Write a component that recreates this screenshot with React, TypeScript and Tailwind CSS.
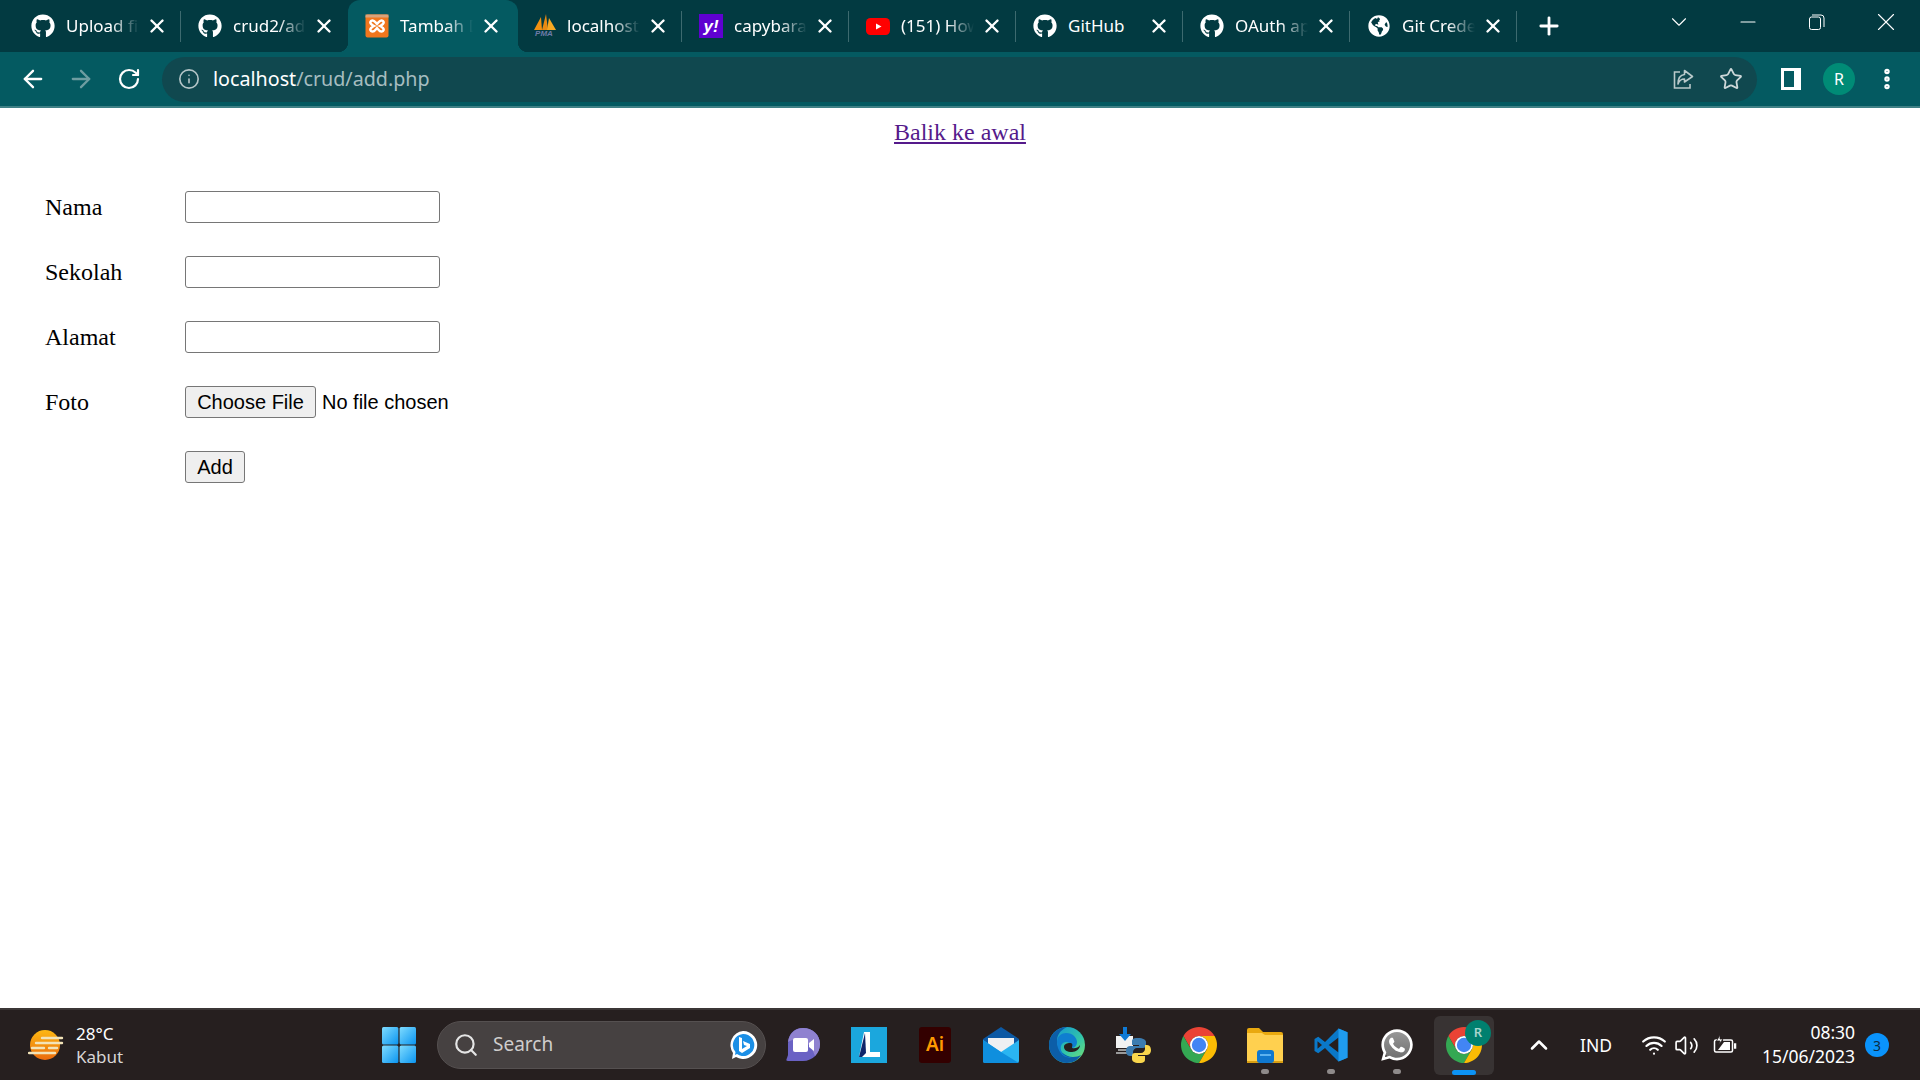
import type { ReactNode } from "react";
import {
  ArrowLeft,
  ArrowRight,
  ChevronDown,
  ChevronUp,
  EllipsisVertical,
  Info,
  Minus,
  Plus,
  RotateCw,
  Search,
  Star,
  Volume2,
  Wifi,
  X,
} from "lucide-react";
import { FaGithub, FaGlobeAmericas, FaWhatsapp } from "react-icons/fa";

const XamppIcon = () => (
  <svg viewBox="0 0 24 24" className="h-6 w-6">
    <rect x="0.5" y="0.5" width="23" height="23" rx="2" fill="#f0761d" />
    <rect x="0.5" y="0.5" width="23" height="3" fill="#d9a27a" />
    <path
      d="M6 7c3-2 4 1 6 3 2-2 3-5 6-3 2 2-1 4-3 5 2 1 5 3 3 5-3 2-4-1-6-3-2 2-3 5-6 3-2-2 1-4 3-5-2-1-5-3-3-5z"
      fill="none"
      stroke="#fff"
      strokeWidth="2.4"
    />
  </svg>
);

const PmaIcon = () => (
  <svg viewBox="0 0 24 24" className="h-6 w-6">
    <path d="M2 16 L9 3 L10 16z" fill="#f29111" />
    <path d="M10 16 L14 0 L16 16z" fill="#e98a12" />
    <path d="M15 16 L17 4 L24 16z" fill="#f7a823" />
    <text x="12" y="22" textAnchor="middle" fontSize="8" fontStyle="italic" fontWeight="700" fill="#6d7aa8" fontFamily="Liberation Sans, sans-serif">
      PMA
    </text>
  </svg>
);

const YahooIcon = () => (
  <span className="flex h-6 w-6 items-center justify-center bg-[#5f01d1] font-['Liberation_Sans',sans-serif] text-[17px] font-bold italic leading-none text-white">
    y!
  </span>
);

const YoutubeIcon = () => (
  <svg viewBox="0 0 24 24" className="h-6 w-6">
    <rect x="0" y="4" width="24" height="17" rx="4.5" fill="#f00" />
    <path d="M10 9.500 L15.500 12.500 L10 15.500z" fill="#fff" />
  </svg>
);

const tabs: { title: string; icon: ReactNode; active?: boolean; noFade?: boolean }[] = [
  { title: "Upload fi", icon: <FaGithub className="h-6 w-6 text-white" /> },
  { title: "crud2/ad", icon: <FaGithub className="h-6 w-6 text-white" /> },
  { title: "Tambah D", icon: <XamppIcon />, active: true },
  { title: "localhost", icon: <PmaIcon /> },
  { title: "capybara", icon: <YahooIcon /> },
  { title: "(151) How", icon: <YoutubeIcon /> },
  { title: "GitHub", icon: <FaGithub className="h-6 w-6 text-white" />, noFade: true },
  { title: "OAuth ap", icon: <FaGithub className="h-6 w-6 text-white" /> },
  { title: "Git Crede", icon: <FaGlobeAmericas className="h-[22px] w-[22px] text-white" /> },
];

const Tab = ({ title, icon, active, noFade, hideLine }: { title: string; icon: ReactNode; active?: boolean; noFade?: boolean; hideLine?: boolean }) => (
  <div
    className={
      active
        ? "relative mr-[-3px] flex h-full w-[170px] items-center rounded-t-[12px] bg-[#045a61] pl-[17px]"
        : hideLine
          ? "flex h-[31px] w-[167px] items-center pl-[17px]"
          : "flex h-[31px] w-[167px] items-center border-r border-[#3d6a6f] pl-[17px]"
    }
  >
    {active && (
      <>
        <span className="absolute bottom-0 left-[-10px] h-[10px] w-[10px] bg-[radial-gradient(circle_at_0_0,transparent_10px,#045a61_10.5px)]" />
        <span className="absolute bottom-0 right-[-10px] h-[10px] w-[10px] bg-[radial-gradient(circle_at_100%_0,transparent_10px,#045a61_10.5px)]" />
      </>
    )}
    <span className="flex w-6 shrink-0 justify-center">{icon}</span>
    <span
      className={
        noFade
          ? "ml-[11px] w-[73px] overflow-hidden whitespace-nowrap text-[17px] text-white"
          : "ml-[11px] w-[73px] overflow-hidden whitespace-nowrap text-[17px] text-white [mask-image:linear-gradient(to_right,black_62%,transparent_100%)]"
      }
    >
      {title}
    </span>
    <X size={22} strokeWidth={2.6} className="ml-[7px] shrink-0 text-white" />
  </div>
);

const ShareIcon = () => (
  <svg viewBox="0 0 24 24" className="h-6 w-6" fill="none" stroke="#b9c9ca" strokeWidth="1.6">
    <path d="M9 5H3.500v16H19v-4" />
    <path d="M13.500 3.500 L21.500 9.500 L13.500 15 V12 C10 12 8 14 7 17 C7 12 9 8 13.500 7.500z" strokeLinejoin="round" />
  </svg>
);

const WeatherIcon = () => (
  <svg viewBox="0 0 36 30" className="h-[30px] w-9">
    <defs>
      <linearGradient id="sun" x1="0" y1="0" x2="0" y2="1">
        <stop offset="0" stopColor="#fdb813" />
        <stop offset="1" stopColor="#ea6a0c" />
      </linearGradient>
    </defs>
    <ellipse cx="17" cy="15" rx="15" ry="15" fill="url(#sun)" />
    <g stroke="#f2e3b8" strokeWidth="2.4" strokeLinecap="round">
      <path d="M14 8h20" />
      <path d="M8 13h26" />
      <path d="M4 18h12" />
      <path d="M21 18h8" />
      <path d="M1 23h26" />
    </g>
  </svg>
);

const WindowsIcon = () => (
  <svg viewBox="0 0 34 36" className="h-9 w-[34px]">
    <defs>
      <linearGradient id="win" x1="0" y1="0" x2="1" y2="1">
        <stop offset="0" stopColor="#7fdcff" />
        <stop offset="1" stopColor="#0a94f0" />
      </linearGradient>
    </defs>
    <rect x="0" y="0" width="16.4" height="17.4" rx="1.5" fill="url(#win)" />
    <rect x="17.6" y="0" width="16.4" height="17.4" rx="1.5" fill="url(#win)" />
    <rect x="0" y="18.6" width="16.4" height="17.4" rx="1.5" fill="url(#win)" />
    <rect x="17.6" y="18.6" width="16.4" height="17.4" rx="1.5" fill="url(#win)" />
  </svg>
);

const BingIcon = () => (
  <svg viewBox="0 0 30 30" className="h-[30px] w-[30px]">
    <path d="M15 1a14 14 0 1 1-7 26l-4 2 1-6A14 14 0 0 1 15 1z" fill="#fff" />
    <path d="M15 4a11 11 0 1 1-6 20l-2 1 .5-3A11 11 0 0 1 15 4z" fill="#1b8fe6" />
    <path d="M11 7l3 1v11l5-3-3-1-1-4 7 3v4l-8 5-3-2z" fill="#fff" />
  </svg>
);

const MeetIcon = () => (
  <svg viewBox="0 0 36 36" className="h-9 w-9">
    <path d="M18 1c10 0 17 7 17 16s-7 17-17 17H3c-2 0-2-1-1-3l1-3V17C3 8 8 1 18 1z" fill="#6a62c4" />
    <path d="M18 1c10 0 17 7 17 16 0 5-2 9-5 12-4-12-14-22-27-14C4 7 10 1 18 1z" fill="#8f82d0" />
    <rect x="8" y="11" width="15" height="14" rx="2" fill="#fff" />
    <path d="M24 16l5-4v12l-5-4z" fill="#fff" />
  </svg>
);

const LaragonIcon = () => (
  <svg viewBox="0 0 36 36" className="h-9 w-9">
    <rect width="36" height="36" fill="#1ba7dd" />
    <path d="M13 5h6v20h10v5H8z" fill="#fff" />
    <path d="M8 30 L14 6 L15 26 L11 30z" fill="#10256b" />
  </svg>
);

const AiIcon = () => (
  <span className="flex h-9 w-8 items-center justify-center rounded-[3px] bg-[#330000] font-['Noto_Sans',sans-serif] text-[19px] font-semibold leading-none text-[#ff9a00]">
    Ai
  </span>
);

const MailIcon = () => (
  <svg viewBox="0 0 36 36" className="h-9 w-9">
    <path d="M0 12 L18 0 L36 12 V16 H0z" fill="#0c59a4" />
    <path d="M5 11h26v10L18 28 5 21z" fill="#eef0f2" />
    <path d="M0 13 L18 25 L36 13 V34a2 2 0 0 1-2 2H2a2 2 0 0 1-2-2z" fill="#2ab5f2" />
    <path d="M0 13 L18 25 L36 36 H2a2 2 0 0 1-2-2z" fill="#0f8fde" />
  </svg>
);

const EdgeIcon = () => (
  <svg viewBox="0 0 36 36" className="h-9 w-9">
    <defs>
      <linearGradient id="edgeTop" x1="0" y1="0" x2="1" y2="1">
        <stop offset="0" stopColor="#0f8fd8" />
        <stop offset="0.6" stopColor="#33c6a8" />
        <stop offset="1" stopColor="#7fe36b" />
      </linearGradient>
    </defs>
    <circle cx="18" cy="18" r="18" fill="url(#edgeTop)" />
    <path d="M0 18C0 8 8 0 18 0 10 4 8 9 8 14c0 9 8 16 16 16 3 0 6-1 8-2-3 5-8 8-14 8C8 36 0 28 0 18z" fill="#0c5ea8" />
    <path d="M8 15c0-6 5-9 9-9 7 0 11 5 11 9 0 3-2 6-5 6 0-4-3-6-6-6-4 0-6 4-5 8 1 5 6 8 12 7-8 3-16-5-16-15z" fill="#0f7ed0" />
    <path d="M15 20c0-3 3-4 6-4 2 0 3 1 2 4-1 2 6 2 8-2 0 4-4 7-8 7-5 0-8-2-8-5z" fill="#261f1f" />
  </svg>
);

const PythonIcon = () => (
  <svg viewBox="0 0 36 36" className="h-9 w-9">
    <rect x="1" y="9" width="17" height="12" fill="#f2f2f2" />
    <path d="M1 25h16v2H1z M3 22h12v2H3z" fill="#9a9a9a" />
    <path d="M8 0h4v7h4l-6 7-6-7h4z" fill="#0f7ad6" />
    <path d="M23 11c-6 0-6 2-6 4v3h7v1h-9c-3 0-4 3-4 5s1 5 4 5h3v-4c0-2 2-4 4-4h6c2 0 3-1 3-3v-3c0-2-3-4-8-4z" fill="#3c7cb0" />
    <path d="M24 36c6 0 6-2 6-4v-3h-7v-1h9c3 0 4-3 4-5s-1-5-4-5h-2v4c0 2-2 4-4 4h-6c-2 0-3 1-3 3v3c0 2 2 4 7 4z" fill="#f9d64c" />
  </svg>
);

const ChromeIcon = () => (
  <svg viewBox="4 4 40 40" className="h-9 w-9">
    <path d="M24 4C16.6 4 10.1 8 6.7 14l8.66 15A10 10 0 0 1 24 14h17.3C37.9 8 31.4 4 24 4z" fill="#ea4335" />
    <path d="M6.7 14A20 20 0 0 0 24 44l8.66-15a10 10 0 0 1-17.32 0z" fill="#34a853" />
    <path d="M41.3 14H24a10 10 0 0 1 8.66 15L24 44A20 20 0 0 0 41.3 14z" fill="#fbbc04" />
    <circle cx="24" cy="24" r="10" fill="#fff" />
    <circle cx="24" cy="24" r="8" fill="#4285f4" />
  </svg>
);

const FolderIcon = () => (
  <svg viewBox="0 0 36 36" className="h-9 w-9">
    <path d="M0 3a2 2 0 0 1 2-2h10l4 4h18a2 2 0 0 1 2 2v6H0z" fill="#e9a90f" />
    <path d="M0 6h15l3 2h18v26a2 2 0 0 1-2 2H0z" fill="#ffd04f" />
    <rect x="0" y="34" width="36" height="2" fill="#d99e12" />
    <rect x="10" y="23" width="17" height="13" rx="3" fill="#0f78cf" />
    <rect x="13" y="27" width="11" height="2" fill="#5cb2ef" />
  </svg>
);

const VscodeIcon = () => (
  <svg viewBox="0 0 48 48" className="h-9 w-9">
    <path fillRule="evenodd" d="M34 2 L16 20 L7 13 L2 16 V32 L7 35 L16 28 L34 46 L46 41 V7z M34 14 V34 L21 24z M6 19 L12 24 L6 29z" fill="#0a78c8" />
    <path d="M34 2 L46 7 V41 L34 46z" fill="#1f9cf0" />
  </svg>
);

const WhatsappIcon = () => (
  <span className="relative flex h-9 w-9 items-center justify-center">
    <span className="absolute inset-[3px] rounded-full bg-gradient-to-b from-[#9a9a9a] to-[#6e6e6e]" />
    <FaWhatsapp className="relative h-9 w-9 text-white" />
  </span>
);

const BatteryIcon = () => (
  <svg viewBox="0 0 24 24" className="h-6 w-6" fill="none" stroke="#fff" strokeWidth="1.5">
    <path d="M6 7H3a1.500 1.500 0 0 0-1.500 1.500v9A1.500 1.500 0 0 0 3 19h15a1.500 1.500 0 0 0 1.500-1.500v-9A1.500 1.500 0 0 0 18 7H10" />
    <path d="M21 11h1.500v4H21" fill="#fff" />
    <path d="M5 17 L11 9 H17 V17z" fill="#fff" stroke="none" />
    <path d="M7 2 L3.500 8 H7 L5.500 12 L10 6 H7z" fill="#fff" stroke="#261f1f" strokeWidth="0.8" />
  </svg>
);

const Field = ({ label }: { label: string }) => (
  <>
    <label className="self-center">{label}</label>
    <input type="text" className="h-8 w-[255px] rounded-[3px] border border-[#767676] bg-white" />
  </>
);

const dock: { icon: ReactNode; dot?: boolean }[] = [
  { icon: <MeetIcon /> },
  { icon: <LaragonIcon /> },
  { icon: <AiIcon /> },
  { icon: <MailIcon /> },
  { icon: <EdgeIcon /> },
  { icon: <PythonIcon /> },
  { icon: <ChromeIcon /> },
  { icon: <FolderIcon />, dot: true },
  { icon: <VscodeIcon />, dot: true },
  { icon: <WhatsappIcon />, dot: true },
];

export default function App() {
  return (
    <div className="flex h-screen w-full flex-col overflow-hidden bg-white font-['Noto_Sans',sans-serif]">
      {/* tab strip */}
      <div className="flex h-[52px] shrink-0 items-center bg-[#023a41] pl-[14px]">
        {tabs.map((t, i) => (
          <Tab key={i} {...t} hideLine={i === 1} />
        ))}
        <Plus size={28} strokeWidth={2.4} className="ml-[18px] text-white" />
        <div className="ml-auto flex h-[44px] self-start text-white">
          <div className="flex w-[69px] items-center justify-center">
            <ChevronDown size={26} strokeWidth={1} />
          </div>
          <div className="flex w-[69px] items-center justify-center">
            <Minus size={24} strokeWidth={1.1} />
          </div>
          <div className="flex w-[69px] items-center justify-center">
            <svg viewBox="0 0 16 16" className="h-4 w-4" fill="none" stroke="#fff" strokeWidth="1">
              <rect x="0.5" y="3" width="11" height="12.500" rx="2" />
              <path d="M3 1h9a3 3 0 0 1 3 3v9" />
            </svg>
          </div>
          <div className="flex w-[69px] items-center justify-center">
            <X size={30} strokeWidth={0.9} />
          </div>
        </div>
      </div>

      {/* toolbar */}
      <div className="flex h-[56px] shrink-0 items-center border-b-2 border-[#3f8085] bg-[#045a61] px-[9px] text-white">
        <div className="flex w-[48px] justify-center">
          <ArrowLeft size={28} strokeWidth={2} />
        </div>
        <div className="flex w-[48px] justify-center text-[#6e9da1]">
          <ArrowRight size={28} strokeWidth={2} />
        </div>
        <div className="flex w-[48px] justify-center">
          <RotateCw size={24} strokeWidth={2.2} />
        </div>
        <div className="ml-[9px] flex h-[45px] flex-1 items-center rounded-full bg-[#10484f] pl-[16px] pr-[2px]">
          <Info size={22} strokeWidth={1.8} className="text-[#b3c5c7]" />
          <span className="ml-[13px] text-[19.7px] text-white">
            localhost<span className="text-[#a6bdc0]">/crud/add.php</span>
          </span>
          <div className="ml-auto flex w-[48px] justify-center">
            <ShareIcon />
          </div>
          <div className="flex w-[48px] justify-center">
            <Star size={24} strokeWidth={1.8} className="text-[#cdd8d9]" />
          </div>
        </div>
        <div className="ml-[10px] flex w-[48px] justify-center">
          <span className="flex h-[22px] w-[20px] bg-white p-[3px] pr-[7px]">
            <span className="h-full w-full bg-[#045a61]" />
          </span>
        </div>
        <div className="flex w-[48px] justify-center">
          <span className="flex h-8 w-8 items-center justify-center rounded-full bg-[#008b76] text-[16px] text-white">R</span>
        </div>
        <div className="flex w-[48px] justify-center">
          <EllipsisVertical size={26} strokeWidth={3} />
        </div>
      </div>

      {/* page */}
      <main className="flex-1 font-['Liberation_Serif',serif] text-[24px] leading-[28px] text-black">
        <div className="pt-[10px] text-center">
          <a href="#" className="text-[#551a8b] underline">
            Balik ke awal
          </a>
        </div>
        <form className="mt-[45px] grid grid-cols-[140px_1fr] gap-y-[33px] pl-[45px]">
          <Field label="Nama" />
          <Field label="Sekolah" />
          <Field label="Alamat" />
          <label className="self-center">Foto</label>
          <div className="flex h-8 items-center font-['Liberation_Sans',sans-serif] text-[20px]">
            <button type="button" className="h-8 w-[131px] rounded-[3px] border border-[#767676] bg-[#efefef] text-[20px]">
              Choose File
            </button>
            <span className="ml-[6px]">No file chosen</span>
          </div>
          <div />
          <button type="button" className="h-8 w-[60px] rounded-[3px] border border-[#767676] bg-[#efefef] font-['Liberation_Sans',sans-serif] text-[20px]">
            Add
          </button>
        </form>
      </main>

      {/* taskbar */}
      <footer className="flex h-[72px] shrink-0 items-center border-t-2 border-[#3b3636] bg-[#261f1f] text-white">
        <div className="flex w-[382px] shrink-0 items-center pl-[28px]">
          <WeatherIcon />
          <div className="ml-[12px] text-[17px] leading-[23px]">
            <div>28°C</div>
            <div className="text-[#d8d6d6]">Kabut</div>
          </div>
        </div>
        <WindowsIcon />
        <div className="mb-[1px] ml-[21px] flex h-12 w-[329px] shrink-0 items-center rounded-full border border-[#555050] bg-[#464141] pl-[15px] pr-[7px]">
          <Search size={26} strokeWidth={2} className="text-[#e5e5e5]" />
          <span className="ml-[14px] text-[19px] text-[#cfcdcd]">Search</span>
          <span className="ml-auto">
            <BingIcon />
          </span>
        </div>
        <div className="ml-[4px] flex">
          {dock.map((d, i) => (
            <div key={i} className="relative flex h-[58px] w-[66px] items-center justify-center">
              {d.icon}
              {d.dot && <span className="absolute bottom-0 left-[29px] h-[5px] w-[8px] rounded-full bg-[#8e8a8a]" />}
            </div>
          ))}
          <div className="relative ml-[4px] flex h-[59px] w-[60px] items-center justify-center rounded-[6px] bg-[#383333]">
            <ChromeIcon />
            <span className="absolute right-[3px] top-[4px] flex h-[26px] w-[26px] items-center justify-center rounded-full bg-[#00806f] text-[13px] font-semibold text-[#a8d5cd]">
              R
            </span>
            <span className="absolute bottom-0 left-[18px] h-[5px] w-[24px] rounded-full bg-[#0c93f5]" />
          </div>
        </div>
        <ChevronUp size={28} strokeWidth={2.2} className="ml-[31px]" />
        <span className="ml-[27px] text-[17.5px]">IND</span>
        <Wifi size={26} strokeWidth={2} className="ml-[29px]" />
        <Volume2 size={25} strokeWidth={1.6} className="ml-[7px]" />
        <span className="ml-[14px]">
          <BatteryIcon />
        </span>
        <div className="mb-[2px] ml-[25px] text-right text-[17.5px] leading-[24px]">
          <div>08:30</div>
          <div>15/06/2023</div>
        </div>
        <span className="ml-[10px] flex h-6 w-6 items-center justify-center rounded-full bg-[#0a93fb] text-[14px] text-[#0d2c44]">3</span>
      </footer>
    </div>
  );
}
